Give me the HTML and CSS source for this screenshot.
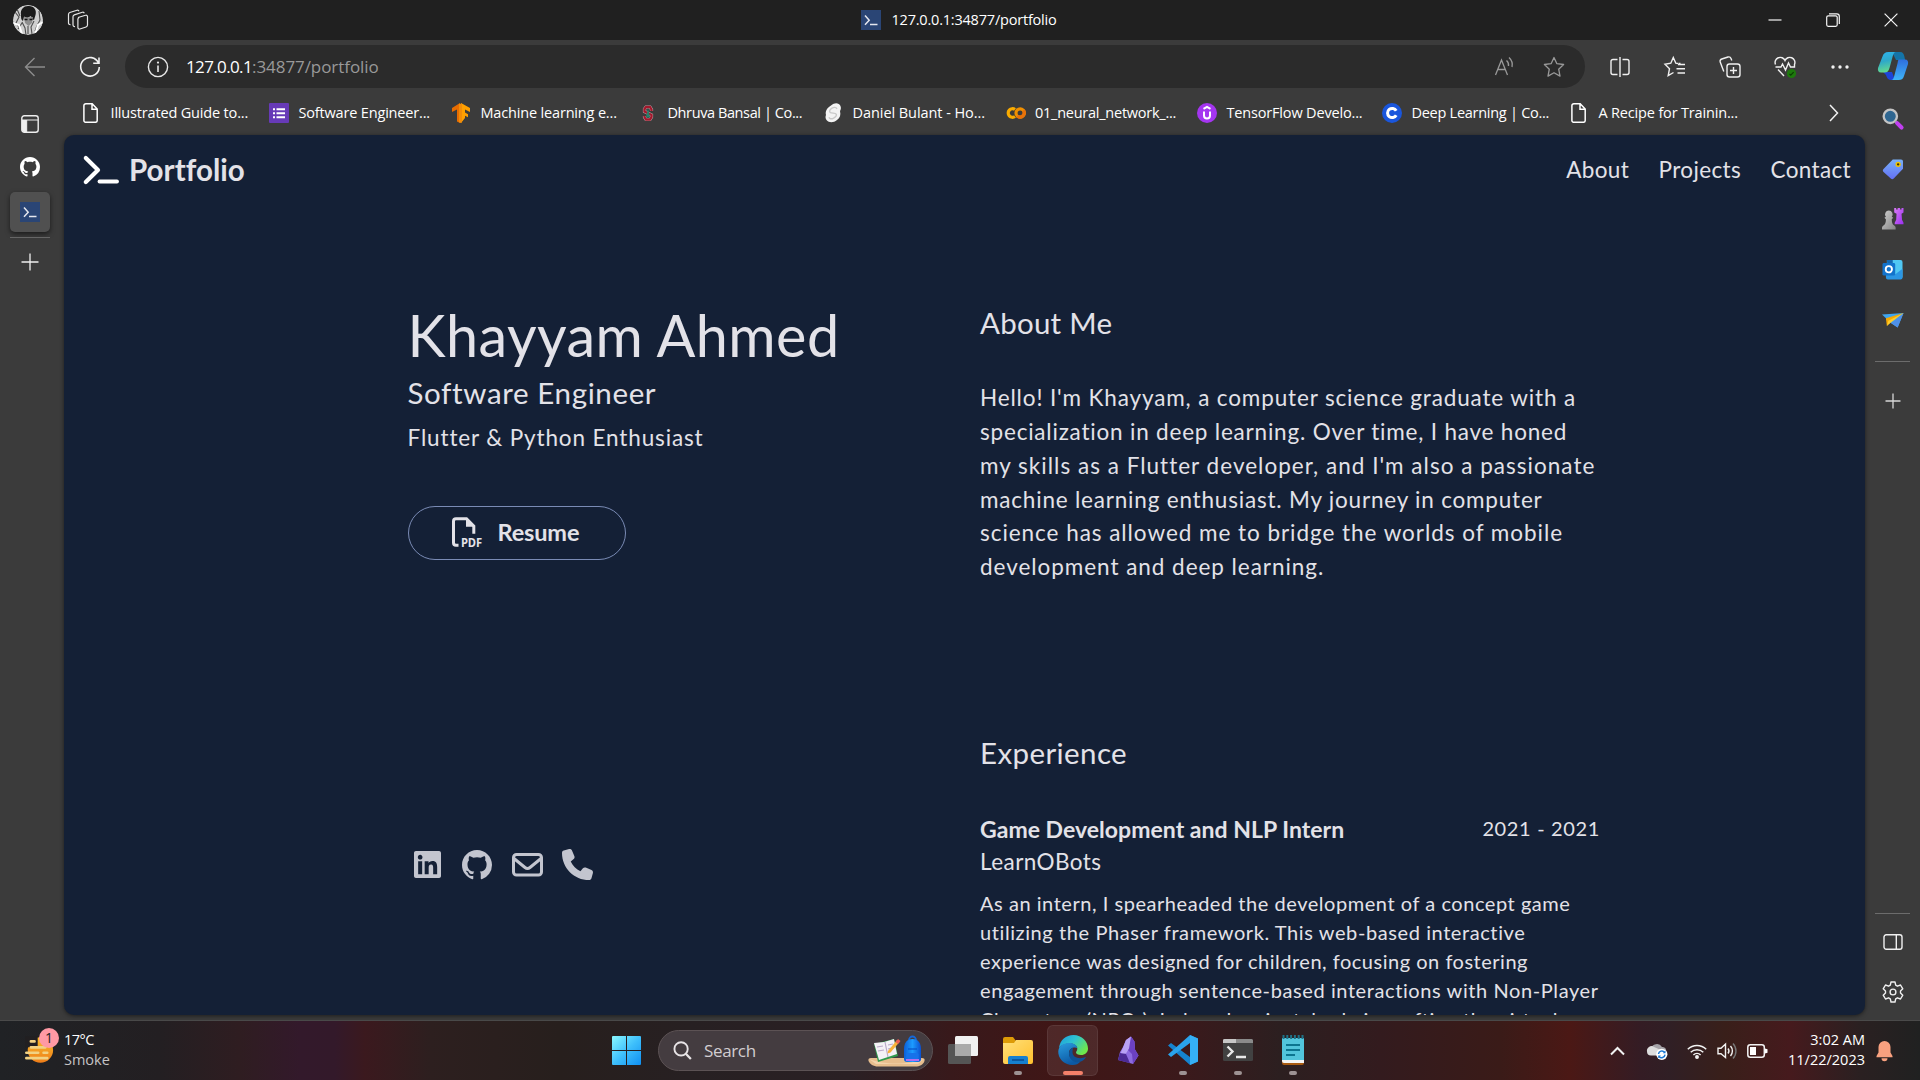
FILE: index.html
```html
<!DOCTYPE html>
<html lang="en">
<head>
<meta charset="utf-8">
<title>127.0.0.1:34877/portfolio</title>
<link rel="stylesheet" href="styles.css">
</head>
<body>
<svg width="0" height="0" class="defs">
  <defs>
    <symbol id="github" viewBox="0 0 16 16"><path d="M8 0C3.58 0 0 3.58 0 8c0 3.54 2.29 6.53 5.47 7.59.4.07.55-.17.55-.38 0-.19-.01-.82-.01-1.49-2.01.37-2.53-.49-2.69-.94-.09-.23-.48-.94-.82-1.13-.28-.15-.68-.52-.01-.53.63-.01 1.08.58 1.23.82.72 1.21 1.87.87 2.33.66.07-.52.28-.87.51-1.07-1.78-.2-3.64-.89-3.64-3.95 0-.87.31-1.59.82-2.15-.08-.2-.36-1.02.08-2.12 0 0 .67-.21 2.2.82.64-.18 1.32-.27 2-.27s1.36.09 2 .27c1.53-1.04 2.2-.82 2.2-.82.44 1.1.16 1.92.08 2.12.51.56.82 1.27.82 2.15 0 3.07-1.87 3.75-3.65 3.95.29.25.54.73.54 1.48 0 1.07-.01 1.93-.01 2.2 0 .21.15.46.55.38A8.01 8.01 0 0 0 16 8c0-4.42-3.58-8-8-8z"/></symbol>
    <symbol id="prompt" viewBox="0 0 20 20"><rect width="20" height="20" fill="#2a4575"/><path d="M4 5.500l4.200 4.700L4 14.800M9 14.600h7.500" fill="none" stroke="#e4e6ee" stroke-width="1.500"/></symbol>
    <symbol id="doc" viewBox="0 0 20 20"><path d="M4.800.8h6.400l5 5.200v11.400a1.900 1.900 0 0 1-1.900 1.900H4.800a1.900 1.900 0 0 1-1.900-1.900V2.700A1.900 1.900 0 0 1 4.800.8zM11 .9v5.300h5.200" fill="none" stroke="#fff" stroke-width="1.500"/></symbol>
    <linearGradient id="cpA" x1="0" y1="0" x2="0.2" y2="1"><stop offset="0" stop-color="#2db4f0"/><stop offset=".5" stop-color="#2fa9c9"/><stop offset="1" stop-color="#62d88f"/></linearGradient>
    <linearGradient id="cpB" x1="0" y1="0" x2="0" y2="1"><stop offset="0" stop-color="#2f6ede"/><stop offset="1" stop-color="#3fb5f8"/></linearGradient>
    <linearGradient id="violet" x1="0" y1="0" x2="1" y2="1"><stop offset="0" stop-color="#d97cf5"/><stop offset="1" stop-color="#9b2ff0"/></linearGradient>
    <linearGradient id="tagG" x1="0" y1="0" x2="0" y2="1"><stop offset="0" stop-color="#78b0f8"/><stop offset="1" stop-color="#6370f5"/></linearGradient>
    <linearGradient id="greyG" x1="0" y1="0" x2="1" y2="1"><stop offset="0" stop-color="#cfcfcf"/><stop offset="1" stop-color="#858585"/></linearGradient>
    <linearGradient id="winG" gradientUnits="userSpaceOnUse" x1="0" y1="0" x2="29" y2="29"><stop offset="0" stop-color="#8af8ff"/><stop offset=".5" stop-color="#3fc0fb"/><stop offset="1" stop-color="#0f8ff2"/></linearGradient>
    <linearGradient id="sunG" x1="0" y1="0" x2="0" y2="1"><stop offset="0" stop-color="#f8bc2c"/><stop offset="1" stop-color="#ee7d19"/></linearGradient>
    <linearGradient id="foldG" x1="0" y1="0" x2="1" y2="1"><stop offset="0" stop-color="#ffe07a"/><stop offset="1" stop-color="#ffc02e"/></linearGradient>
    <linearGradient id="edgeG" x1="0" y1="0" x2="1" y2=".6"><stop offset="0" stop-color="#1b9be0"/><stop offset=".5" stop-color="#2fc3cf"/><stop offset="1" stop-color="#6fe84c"/></linearGradient>
    <linearGradient id="edgeB" x1="0" y1="0" x2=".4" y2="1"><stop offset="0" stop-color="#2a9ddf"/><stop offset="1" stop-color="#0c59a4"/></linearGradient>
    <linearGradient id="packG" x1="0" y1="0" x2="1" y2="0"><stop offset="0" stop-color="#0c5fd8"/><stop offset=".5" stop-color="#1c9bff"/><stop offset="1" stop-color="#0b50d0"/></linearGradient>
    <clipPath id="face"><circle cx="15" cy="15" r="15"/></clipPath>
  </defs>
</svg>

<div class="desktop">
  <header class="titlebar">
    <div class="title-left">
      <svg class="avatar" viewBox="0 0 30 30"><g clip-path="url(#face)"><circle cx="15" cy="15" r="15" fill="#cfcfcf"/><path d="M8 10C7 4 11 .5 16 1c5 0 8 4 6.500 9l-1.500 5-2-1-1-3-4 2-3-1.500-1 4.500c-2-1-2-3-2-6z" fill="#1b1b1b"/><path d="M11 12l4 .5 5-.5-1 6-3.500 3-3.500-3z" fill="#8d8d8d"/><path d="M2 7l4 5-3 6 4 6M4 4l3 7M26 6l1 9-4 8M9 17l3 6 1 7M21 16l-3 6 1 7M5 24l4-6M25 19l-3 7M15 21v8" stroke="#4d4d4d" stroke-width="1.100" fill="none"/><path d="M0 18l6 2 3 9M30 17l-5 3-3 10" stroke="#fff" stroke-width="2" fill="none"/><path d="M11.500 14.500h3M16.500 14.500h3" stroke="#111" stroke-width="1.400"/></g></svg>
      <svg class="ic22" viewBox="0 0 22 22" fill="none" stroke="#e6e6e6" stroke-width="1.200"><path d="M11 8.500l7.500-2.300a1.500 1.500 0 0 1 2 1.400v8.500a2 2 0 0 1-1.400 1.900l-6.200 2a1.500 1.500 0 0 1-2-1.400V10.200a2 2 0 0 1 1.300-1.800"/><path d="M8 17.500a1.700 1.700 0 0 1-2-1.500V7.800a2 2 0 0 1 1.300-1.900l8-2.600a1.600 1.600 0 0 1 2 1"/><path d="M3.500 15.600a1.700 1.700 0 0 1-2-1.500V5.400a2 2 0 0 1 1.300-1.900L10 1.200a1.600 1.600 0 0 1 2 1"/></svg>
    </div>
    <div class="title-mid"><svg class="ic20"><use href="#prompt"/></svg><span>127.0.0.1:34877/portfolio</span></div>
    <div class="title-right">
      <svg viewBox="0 0 14 14"><path d="M.5 7h13"/></svg>
      <svg viewBox="0 0 14 14"><rect x=".7" y="2.800" width="10.500" height="10.500" rx="1.500"/><path d="M3 .8h7.800a2.500 2.500 0 0 1 2.500 2.500V11"/></svg>
      <svg viewBox="0 0 14 14"><path d="M.6.6l12.800 12.800M13.400.6L.6 13.400"/></svg>
    </div>
  </header>

  <div class="browser">
    <div class="toolbar">
      <div class="nav-buttons">
        <svg class="ic22" viewBox="0 0 22 22" fill="none" stroke="#8c8c8c" stroke-width="1.400"><path d="M21 11H2M10.500 2L1.500 11l9 9"/></svg>
        <svg class="ic22" viewBox="0 0 22 22" fill="none" stroke="#f2f2f2" stroke-width="1.600"><path d="M19.500 7A9.300 9.300 0 1 0 20.300 11M20 1.500V7.300H14.200"/></svg>
      </div>
      <div class="address">
        <svg class="ic22" viewBox="0 0 22 22"><circle cx="11" cy="11" r="9.600" fill="none" stroke="#e8e8e8" stroke-width="1.400"/><path d="M11 9.500v6.500" stroke="#e8e8e8" stroke-width="1.600"/><circle cx="11" cy="6.600" r="1.100" fill="#e8e8e8"/></svg>
        <div class="url"><span class="host">127.0.0.1</span><span class="path">:34877/portfolio</span></div>
        <svg class="ic22 read" viewBox="0 0 22 22" fill="none" stroke="#999" stroke-width="1.300"><path d="M1.500 19L7.500 4l6 15M3.800 13.500h7.500M12.500 4.500a6 6 0 0 1 2 5.500M15 1.500a10 10 0 0 1 3 9.500"/></svg>
        <svg class="ic22" viewBox="0 0 22 22" fill="none" stroke="#999" stroke-width="1.300" stroke-linejoin="round"><path d="M11 1.500l2.900 6.200 6.700.8-4.900 4.700 1.300 6.900-6-3.400-6 3.400 1.300-6.900L1.400 8.500l6.700-.8z"/></svg>
      </div>
      <div class="tools">
        <svg class="ic22" viewBox="0 0 22 22"><path d="M8.500 3.500H4a2 2 0 0 0-2 2v11a2 2 0 0 0 2 2h4.500M13.500 3.500H18a2 2 0 0 1 2 2v11a2 2 0 0 1-2 2h-4.500M11 1v20"/></svg>
        <svg class="ic22" viewBox="0 0 22 22"><path d="M14 7.500L11.800 7.200 9.300 1.500 6.800 7.200 1 8.200l4.500 4.500-1.300 7L9.500 16.500M14 8.500h7M12.500 12.700H21M13.500 17H21M14.500 7.500h2"/></svg>
        <svg class="ic22" viewBox="0 0 22 22"><rect x="8" y="8" width="13" height="13" rx="2.500"/><path d="M14.500 11v7M11 14.500h7M4.800 15.500L1.200 6a2.500 2.500 0 0 1 1.600-3L9 1a2.500 2.500 0 0 1 3 1.500l.8 2"/></svg>
        <svg class="ic22" viewBox="0 0 22 22"><path d="M1.500 8.500a5 5 0 0 1 9.500-4 5 5 0 0 1 9.500 4v2.500h-4l-2-4-3 7-3-6-1.500 3H1.500M4 13.500l6 6.500"/><circle cx="17.500" cy="17.500" r="4.600" fill="#1d7a0c" stroke="none"/><path d="M15.500 17.800l1.300 1.300 2.800-3" stroke="#0b3d04" stroke-width="1.200"/></svg>
        <svg class="ic22" viewBox="0 0 22 22"><g fill="#f2f2f2" stroke="none"><circle cx="4" cy="11" r="1.700"/><circle cx="11" cy="11" r="1.700"/><circle cx="18" cy="11" r="1.700"/></g></svg>
      </div>
    </div>

    <aside class="tabs">
      <svg class="ic18" viewBox="0 0 18 18"><rect x=".8" y=".8" width="16.400" height="16.400" rx="2.500" fill="none" stroke="#eee" stroke-width="1.400"/><path d="M1 5h16M5.700 5v12" stroke="#eee" stroke-width="1"/><path d="M1 5h4.700v12H3a2 2 0 0 1-2-2z" fill="#eee"/></svg>
      <svg class="ic20 gh" fill="#fff"><use href="#github"/></svg>
      <div class="active-tab"><svg class="ic20"><use href="#prompt"/></svg></div>
      <svg class="ic18 add" viewBox="0 0 18 18"><path d="M9 .5v17M.5 9h17" stroke="#f0f0f0" stroke-width="1.300"/></svg>
    </aside>

    <nav class="bookmarks">
      <a><svg><use href="#doc"/></svg><span>Illustrated Guide to...</span></a>
      <a><svg viewBox="0 0 20 20"><rect width="20" height="20" rx="1" fill="#673ab7"/><path d="M4 6.200h2M4 10.200h2M4 14.200h2M7.500 6.200H16M7.500 10.200H16M7.500 14.200H16" stroke="#fff" stroke-width="2"/></svg><span>Software Engineer...</span></a>
      <a><svg viewBox="0 0 20 20"><path d="M9 0v20l-3-1.500V6.500L1 9V5z" fill="#e86c00"/><path d="M10 0l9 5v4l-5-2.500v3l3 1.700v3l-3-1.500V15l-4 5z" fill="#ffa000"/><path d="M8 .8h3v18.500l-1.500.7L8 19.300z" fill="#f28c08"/></svg><span>Machine learning e...</span></a>
      <a><svg viewBox="0 0 20 20"><path d="M13.500 8V6.500L12 4H8L6.500 6v2.500l7 3.500v2L12 16.500H8L6.500 14v-1" fill="none" stroke="#b9b9b9" stroke-width="3.200"/><path d="M13.500 8V6.500L12 4H8L6.500 6v2.500l7 3.500v2L12 16.500H8L6.500 14v-1" fill="none" stroke="#a3182c" stroke-width="2.400"/><path d="M10 5l2 9.500H8z" fill="#26806b"/></svg><span>Dhruva Bansal | Co...</span></a>
      <a><svg viewBox="0 0 20 20"><path d="M8 2.500C12-.8 16 0 17.500 3c1 2.500 0 4-.5 5 1 4 0 7-3 9-3.500 3-8 3-10.500 0-1.500-2-1-4-.5-5C2 8 4 5 8 2.500z" fill="#f3f3f3"/><path d="M14 6c-1-2-3-2-5-.8S5.500 8.500 7.500 9.700c2 .8 5 0 5.800 1.600.7 2-1 3-3 4s-3.800.5-4.300-1" fill="none" stroke="#c9c9c9" stroke-width="1.400"/></svg><span>Daniel Bulant - Ho...</span></a>
      <a><svg viewBox="0 0 20 20" fill="none" stroke-width="3.200"><path d="M9 6.500a4.300 4.300 0 1 0 0 7" stroke="#f9ab00"/><circle cx="14.200" cy="10" r="4.200" stroke="#f09000"/><path d="M17.300 7.200a4.200 4.200 0 0 1-6 5.800" stroke="#e8710a"/></svg><span>01_neural_network_...</span></a>
      <a><svg viewBox="0 0 20 20" fill="none" stroke="#fff" stroke-width="2"><circle cx="10" cy="10" r="10" fill="#a435f0" stroke="none"/><path d="M6.500 5.800L10 3.900l3.500 1.900M7 8.500v4a3 3 0 0 0 6 0v-4"/></svg><span>TensorFlow Develo...</span></a>
      <a><svg viewBox="0 0 20 20"><circle cx="10" cy="10" r="10" fill="#1a56dc"/><path d="M14.200 7.800a4.600 4.600 0 1 0 0 4.400" fill="none" stroke="#fff" stroke-width="3"/></svg><span>Deep Learning | Co...</span></a>
      <a><svg><use href="#doc"/></svg><span>A Recipe for Trainin...</span></a>
      <svg class="more" viewBox="0 0 20 20"><path d="M6 2l7.500 8L6 18" fill="none" stroke="#f2f2f2" stroke-width="1.500"/></svg>
    </nav>

    <main class="page">
      <header class="site-head">
        <svg class="logo" viewBox="0 0 35 28" fill="none" stroke="#fff"><path d="M1.800 2L14 14 1.800 26" stroke-width="4.200" stroke-linecap="round" stroke-linejoin="round"/><path d="M15.500 25.500h17.500" stroke-width="3.800" stroke-linecap="round"/></svg>
        <span class="brand">Portfolio</span>
        <nav class="links"><a>About</a><a>Projects</a><a>Contact</a></nav>
      </header>
      <div class="columns">
        <section class="intro">
          <h1>Khayyam Ahmed</h1>
          <h2>Software Engineer</h2>
          <p>Flutter &amp; Python Enthusiast</p>
          <a class="resume">
            <svg viewBox="0 0 30 30"><path d="M6.500 28.200H4A2.500 2.500 0 0 1 1.500 25.700V4.200A2.500 2.500 0 0 1 4 1.700H14.500L21.800 9v7.800" fill="none" stroke="#e3e2e8" stroke-width="3"/><path d="M14 1l8.500 8.800H14z" fill="#e3e2e8"/><text x="9" y="30" textLength="21" lengthAdjust="spacingAndGlyphs">PDF</text></svg>
            <span>Resume</span>
          </a>
          <div class="social">
            <svg class="in" viewBox="0 32 448 448"><path d="M416 32H31.900C14.300 32 0 46.500 0 64.300v383.400C0 465.500 14.300 480 31.900 480H416c17.600 0 32-14.500 32-32.300V64.300c0-17.800-14.400-32.300-32-32.300zM135.400 416H69V202.200h66.500V416zm-33.200-243c-21.300 0-38.500-17.300-38.500-38.500S80.900 96 102.200 96c21.200 0 38.500 17.300 38.500 38.500 0 21.300-17.200 38.500-38.500 38.500zm282.100 243h-66.400V312c0-24.800-.5-56.700-34.500-56.700-34.600 0-39.900 27-39.900 54.900V416h-66.400V202.200h63.700v29.200h.9c8.900-16.800 30.600-34.500 62.900-34.500 67.200 0 79.700 44.300 79.700 101.900V416z"/></svg>
            <svg class="git"><use href="#github"/></svg>
            <svg class="mail" viewBox="0 0 31 24"><rect x="1.500" y="1.500" width="28" height="20.500" rx="3" fill="none" stroke="#c3c5cf" stroke-width="3"/><path d="M2 5.500l11 9a4 4 0 0 0 5 0l11-9" fill="none" stroke="#c3c5cf" stroke-width="3"/></svg>
            <svg class="phone" viewBox="0 0 512 512"><path d="M164.900 24.600c-7.700-18.600-28-28.500-47.400-23.200l-88 24C12.100 30.200 0 46 0 64C0 311.400 200.600 512 448 512c18 0 33.800-12.100 38.600-29.500l24-88c5.300-19.400-4.600-39.700-23.200-47.400l-96-40c-16.300-6.800-35.200-2.100-46.300 11.600L304.700 368C234.300 334.700 177.300 277.700 144 207.300L193.300 167c13.700-11.200 18.400-30 11.600-46.300l-40-96z"/></svg>
          </div>
        </section>
        <section class="details">
          <h2 class="about-title">About Me</h2>
          <p class="about"><span>Hello! I'm Khayyam, a computer science graduate with a</span> <span>specialization in deep learning. Over time, I have honed</span> <span>my skills as a Flutter developer, and I'm also a passionate</span> <span>machine learning enthusiast. My journey in computer</span> <span>science has allowed me to bridge the worlds of mobile</span> <span>development and deep learning.</span></p>
          <h2 class="exp-title">Experience</h2>
          <div class="job-head"><h3>Game Development and NLP Intern</h3><time>2021 - 2021</time></div>
          <div class="company">LearnOBots</div>
          <p class="job"><span>As an intern, I spearheaded the development of a concept game</span> <span>utilizing the Phaser framework. This web-based interactive</span> <span>experience was designed for children, focusing on fostering</span> <span>engagement through sentence-based interactions with Non-Player</span> <span>Characters (NPCs). I played a pivotal role in crafting the virtual</span></p>
        </section>
      </div>
    </main>

    <aside class="sidebar">
      <svg class="copilot" viewBox="0 0 30 28"><path d="M14 0h8c3 0 4 2 4.500 5l.6 3H18z" fill="#1474a8"/><path d="M5 20h9l3 8h-3c-4 0-5-2-6-5z" fill="#1d45d8"/><path d="M10.500 0H18c-2 0-2.700 2-3.500 5l-3 11c-1 3-2 4.500-5 4.500H3c-2.500 0-3.500-2-3-4.500L4.500 4.500C5.500 1.500 7 0 10.500 0z" fill="url(#cpA)"/><path d="M21 7.500h6c2.500 0 3.500 2 3 4.500L26 24c-1 3-2.500 4-5.500 4H13c2 0 2.800-2 3.500-5l3-11.500c.7-3 .5-4 1.500-4z" fill="url(#cpB)"/></svg>
      <svg class="app a1" viewBox="0 0 22 22"><circle cx="8.500" cy="8.500" r="6.800" fill="#2f6690" stroke="#c4c4c4" stroke-width="2.400"/><path d="M13.500 13.500l2 2" stroke="#aaa" stroke-width="2.500"/><path d="M15.500 15.500l4.500 4.500" stroke="#c13ff0" stroke-width="4.200" stroke-linecap="round"/></svg>
      <svg class="app" viewBox="0 0 22 22"><path d="M11 1.500h8.500a2 2 0 0 1 2 2V11L12 21a2 2 0 0 1-3 0L1.300 14a2 2 0 0 1 0-2.500z" fill="url(#tagG)"/><circle cx="16.500" cy="6.500" r="2" fill="#403300" stroke="#f0c400" stroke-width="1.500"/></svg>
      <svg class="app" viewBox="0 0 22 22"><path d="M12.500 0h2v1.500h1.500V0h2.500v1.500H20V0h2v4.500l-2 1.500.5 6 1.500 3v1.500h-9V15l1.500-3 .4-6-2.400-1.500z" fill="url(#violet)"/><path d="M7 2.500a4 4 0 0 1 3 6.500l1.500 1-1.500 1.500c0 3 .5 5 2.500 6.500 1.500 1 1.500 2 1.500 4H0c0-2 0-3 1.500-4C3.500 16.500 4 14.500 4 11.500L2.500 10 4 9a4 4 0 0 1 3-6.500z" fill="url(#greyG)"/></svg>
      <svg class="app" viewBox="0 0 22 22"><path d="M5 1h14a2 2 0 0 1 2 2v16H5z" fill="#50c8f4"/><path d="M6 11h7v-6h-2V1H5z" fill="#1468b0"/><path d="M4 10l9 6 8-6v9a2 2 0 0 1-2 2H6a2 2 0 0 1-2-2z" fill="#2b96e4"/><rect x=".5" y="4" width="13" height="13" rx="1.500" fill="#1273cc"/><circle cx="7" cy="10.500" r="3.200" fill="none" stroke="#fff" stroke-width="1.900"/></svg>
      <svg class="app" viewBox="0 0 22 22"><path d="M0 5.500L22 4l-6 15-6.500-4.500z" fill="#3fa5ee"/><path d="M22 4L9.500 14.500 16 19z" fill="#4f90e8"/><path d="M22 4L4 9.500l1 8 3-5z" fill="#f6a800"/><path d="M5 17.500l4.500-4L22 4 6.500 12z" fill="#ffcd2c"/></svg>
      <hr>
      <svg class="ic18 plus" viewBox="0 0 18 18"><path d="M9 1.500v15M1.500 9h15" stroke="#d8d8d8" stroke-width="1.300"/></svg>
      <div class="grow"></div>
      <hr>
      <svg class="panel" viewBox="0 0 20 16" fill="none" stroke="#f0f0f0" stroke-width="1.400"><rect x="1" y=".8" width="18" height="14.400" rx="2.200"/><path d="M13.300 1v14"/></svg>
      <svg class="ic22 gear" viewBox="0 0 22 22" fill="none" stroke="#f0f0f0" stroke-width="1.400" stroke-linejoin="round"><path d="M9 1h4l.7 3.200 1.700 1L18.500 4l2.300 3.800-2.300 2.200v2l2.300 2.200-2.300 3.800-3.100-1.200-1.700 1L13 21H9l-.7-3.200-1.700-1L3.500 18l-2.300-3.800L3.500 12v-2L1.200 7.800 3.500 4l3.100 1.200 1.700-1z"/><circle cx="11" cy="11" r="2.900"/></svg>
    </aside>
  </div>

  <footer class="taskbar">
    <div class="weather">
      <div class="wx">
        <svg viewBox="0 0 32 38"><circle cx="17" cy="24" r="14" fill="url(#sunG)"/><path d="M0 9h14v12H0z" fill="#211f21"/><path d="M6.500 14.500h4M6.500 21h16M1.500 27h13M20.500 27h4M1.500 33h23" stroke="#f1d283" stroke-width="3" stroke-linecap="round"/></svg>
        <b>1</b>
      </div>
      <div class="wt"><span class="temp">17°C</span><span class="cond">Smoke</span></div>
    </div>
    <div class="dock">
      <svg class="start" viewBox="0 0 29 29" fill="url(#winG)"><path d="M0 1a1 1 0 0 1 1-1h13v14H0zM15 0h13a1 1 0 0 1 1 1v13H15zM0 15h14v14H1a1 1 0 0 1-1-1zM15 15h14v13a1 1 0 0 1-1 1H15z"/></svg>
      <div class="search">
        <svg class="mag" viewBox="0 0 20 20" fill="none" stroke="#e8e4e6"><circle cx="8.500" cy="8.300" r="7" stroke-width="2"/><path d="M13.500 13.500l5.300 5.500" stroke-width="2.400"/></svg>
        <span>Search</span>
        <svg class="bag" viewBox="0 0 57 32"><path d="M3 23h51c2 0 3 1 2.500 3-1.500 4-5 5.500-9 5.500H10C5 31.500 2 29 .5 26 0 24 1 23 3 23z" fill="#e6bd8d"/><path d="M1 24c15 6 40 6 55 0l-6 5H8z" fill="#f2d3ab"/><path d="M6 9l20-5 4 17-20 6z" fill="#2f9a4c"/><path d="M6 8l10-1 10-3 3 15-9 3-9 3z" fill="#f4f1f6"/><path d="M17 7l3 15M9 12l6-1M10 16l6-1M20 10l5-1M20 14l6-1.500" stroke="#b9a8c9" stroke-width="1.200"/><path d="M20 16L29 5l2.500 2-9 10.500-3 1z" fill="#f7b23b"/><path d="M27.500 7L30 4l2.500 2L30 9z" fill="#ee5e53"/><path d="M41 5a3.500 3.500 0 0 1 7 0" fill="none" stroke="#1568d8" stroke-width="1.800"/><path d="M36 14c0-6 3-10 8.500-10S53 8 53 14v10a3 3 0 0 1-3 3H39a3 3 0 0 1-3-3z" fill="url(#packG)"/><path d="M40 14h9" stroke="#0a52c8" stroke-width="1.200"/><rect x="38.500" y="18" width="12" height="6" rx="1.500" fill="#1672ea"/><path d="M38 25h13" stroke="#b16df0" stroke-width="2"/></svg>
      </div>
      <div class="slot"><svg viewBox="0 0 30 30"><rect x="7" y="1" width="23" height="20" rx="1.500" fill="#f1f1f1"/><rect x="0" y="9" width="23" height="20" rx="1.500" fill="#555"/><path d="M7 9h16v12H7z" fill="#aaa"/></svg></div>
      <div class="slot"><svg viewBox="0 0 30 30"><path d="M0 4a2 2 0 0 1 2-2h8l3 4h15v6H0z" fill="#dd9b07"/><path d="M0 8h11l2-3h15a2 2 0 0 1 2 2v20a2 2 0 0 1-2 2H2a2 2 0 0 1-2-2z" fill="url(#foldG)"/><path d="M5 29v-6a2 2 0 0 1 2-2h16a2 2 0 0 1 2 2v6z" fill="#1680d0"/><path d="M9 25h12" stroke="#0a4f93" stroke-width="1.600"/></svg><i></i></div>
      <div class="slot on"><svg viewBox="0 0 30 30"><path d="M1 13C2 5 8 0 15.500 0 24 0 30 6.500 30 13.500c0 4-3 6.500-7 6.500-3 0-5-1-5-2.500 0-1 1.300-1.500 1.300-4 0-3-3.500-5-7.300-5C7 8.500 3 10 1 13z" fill="url(#edgeG)"/><path d="M.3 16C1 10 6 8 11.500 8c4.500 0 7.500 2.500 7.800 5-2-1-8-1-8.300 5-.2 6 6 9.500 11.500 8.500-2 2.500-4.500 3.500-8 3.500C6 30-.3 23 .3 16z" fill="url(#edgeB)"/><path d="M15 12.500c-2 1-4 3-4 6C11 25 17 29 23 26.500c2-1 4-2.500 5-4.500-6 2.500-13.500 1-13.500-5 0-2 .5-3.500.5-4.500z" fill="#0e5296"/></svg><i></i></div>
      <div class="slot"><svg viewBox="0 0 30 30"><path d="M13 5l5-3.500 3.500 5 .5 8 3.500 6L20 29l-7-2-8-2 2-8 3-5z" fill="#8d6be0"/><path d="M18 1.500l3.500 5 .5 8 3.500 6L20 29l-1-10-6-6z" fill="#6b41c2"/><path d="M13 5l5-3.500-2 12-3 5-6 1 3-7z" fill="#b9a2f5"/><path d="M7 18l6 1 4 9.300L5 25z" fill="#4c2b96"/></svg></div>
      <div class="slot"><svg viewBox="0 0 30 30"><path d="M22 0l8 3.500v23L22 30 0 10.500 3 8l19 14z" fill="#1583cf"/><path d="M22 8L3 22l-3-2.500L22 0z" fill="#2aa3ec"/><path d="M22 0l8 3.500v23L22 30z" fill="#35b0f5"/></svg><i></i></div>
      <div class="slot"><svg viewBox="0 0 30 30"><rect y="4" width="30" height="22" rx="1.500" fill="#414141"/><path d="M0 8V5.500A1.500 1.500 0 0 1 1.500 4h27A1.500 1.500 0 0 1 30 5.500V8z" fill="#8a8a8a"/><path d="M0 8V5.500A1.500 1.500 0 0 1 1.500 4H13v4z" fill="#c6c6c6"/><path d="M4.500 11.500l5 5-5 5M13 22h10" fill="none" stroke="#e8e8e8" stroke-width="2.400"/></svg><i></i></div>
      <div class="slot"><svg viewBox="0 0 30 30"><path d="M4 26h22v2a2 2 0 0 1-2 2H6a2 2 0 0 1-2-2z" fill="#a85a10"/><path d="M4 3h22v25H6a2 2 0 0 1-2-2z" fill="#f4f4f4"/><path d="M4 3h22v22H4z" fill="#52c5dc"/><path d="M5.500 0v4M9.300 0v4M13.100 0v4M16.900 0v4M20.700 0v4M24.500 0v4" stroke="#1f7287" stroke-width="2"/><path d="M8 10h14M8 15h14M8 20h9" stroke="#0c7590" stroke-width="2"/></svg><i></i></div>
    </div>
    <div class="tray">
      <svg class="chev" viewBox="0 0 15 10"><path d="M1 8.500L7.500 2 14 8.500" fill="none" stroke="#f2f2f2" stroke-width="2"/></svg>
      <svg class="cloud" viewBox="0 0 21 18"><path d="M4 7a6 6 0 0 1 11-2c3 0 5 2 4 6l-8 2z" fill="#a5a3a8"/><path d="M0 9.500A4.500 4.500 0 0 1 7 5l7 3-2 5.500H4A4 4 0 0 1 0 9.500z" fill="#ddd"/><circle cx="14.800" cy="12.300" r="5.600" fill="#fff"/><path d="M11.500 12a3.400 3.400 0 0 1 6-1.800M18 12.600a3.400 3.400 0 0 1-6 1.800" fill="none" stroke="#1676d2" stroke-width="1.500"/><path d="M18.500 8.500V11.200H15.800zM11.200 16.200v-2.700h2.700z" fill="#1676d2"/></svg>
      <svg class="wifi" viewBox="0 0 20 16" fill="none" stroke="#f2f2f2" stroke-width="1.500"><path d="M.8 6.200a13 13 0 0 1 18.400 0M3.700 9.200a9 9 0 0 1 12.600 0M6.400 12a5.200 5.200 0 0 1 7.200 0"/><circle cx="10" cy="14" r="1.200" fill="#f2f2f2"/></svg>
      <svg class="vol" viewBox="0 0 20 18" fill="none" stroke="#f2f2f2" stroke-width="1.400"><path d="M1 6.200h3L8.500 2v13.500L4 11.800H1zM11 6.500a4 4 0 0 1 0 5M13.500 4a7.500 7.500 0 0 1 0 10"/><path d="M16 1.500a11 11 0 0 1 0 15" stroke="#777"/></svg>
      <svg class="bat" viewBox="0 0 21 14"><rect x=".8" y=".8" width="16.500" height="12.400" rx="2.500" fill="none" stroke="#f2f2f2" stroke-width="1.500"/><path d="M3 3h6v8H3z" fill="#fff"/><path d="M18 4.500l2.500.8v3.400L18 9.500z" fill="#fff"/></svg>
      <div class="clock"><span>3:02 AM</span><span>11/22/2023</span></div>
      <svg class="bell" viewBox="0 0 17 20"><path d="M8.500 0a6 6 0 0 1 6 6v5.500l2 3.500v1.200H.5V15l2-3.500V6a6 6 0 0 1 6-6zM5.500 17.200h6a3 3 0 0 1-6 0z" fill="#f9a17f"/></svg>
    </div>
  </footer>
</div>
</body>
</html>
```
FILE: styles.css
```css
* { box-sizing: border-box; margin: 0; padding: 0; }
body { width: 1920px; height: 1080px; overflow: hidden; background: #3b3b3b; color: #fff; font: 14.5px/20px "Open Sans", "Noto Sans", sans-serif; }
svg { display: block; flex: none; overflow: visible; }
.defs { position: absolute; }
h1, h2, h3 { font-weight: 400; }
.desktop { display: flex; flex-direction: column; height: 1080px; }
.ic18 { width: 18px; height: 18px; }
.ic20 { width: 20px; height: 20px; }
.ic22 { width: 22px; height: 22px; }

/* window title bar */
.titlebar { display: grid; grid-template-columns: 1fr auto 1fr; align-items: center; height: 40px; background: #202020; }
.title-left { display: flex; align-items: center; gap: 24px; padding-left: 13px; }
.avatar { width: 30px; height: 30px; }
.title-mid { display: flex; align-items: center; gap: 10px; letter-spacing: -.2px; transform: translateX(-1px); }
.title-right { display: flex; justify-content: flex-end; gap: 44px; padding-right: 22px; }
.title-right svg { width: 14px; height: 14px; fill: none; stroke: #f5f5f5; stroke-width: 1.200; }

/* browser frame */
.browser { display: grid; grid-template: 52px 43px 880px 6px / 64px 1801px 55px; height: 981px; border-bottom: 1px solid #4a4a4a; }
.toolbar { grid-column: 1 / 3; display: flex; align-items: center; padding: 1px 0 0 24px; }
.nav-buttons { display: flex; gap: 33px; width: 101px; }
.address { display: flex; align-items: center; width: 1460px; height: 43px; border-radius: 22px; background: #2b2b2b; padding: 0 20px 0 22px; gap: 27px; }
.url { flex: 1; font-size: 17px; line-height: 24px; margin-left: -10px; }
.host { letter-spacing: -.63px; }
.path { color: #999; letter-spacing: -.07px; }
.tools { display: flex; gap: 33.200px; padding-left: 23.500px; }
.tools svg { fill: none; stroke: #f0f0f0; stroke-width: 1.400; }

.tabs { grid-row: 2 / 5; display: flex; flex-direction: column; align-items: center; width: 60px; padding-top: 23px; }
.gh { margin-top: 24px; }
.active-tab { display: grid; place-items: center; width: 40px; height: 40px; margin-top: 15px; border-radius: 5px; background: #505050; box-shadow: 0 2px 5px rgba(0,0,0,.55); }
.add { margin-top: 5px; border-top: 1px solid #666; border-width: 1px 0 0; width: 40px; height: 50px; padding: 15px 11px 16px; }

.bookmarks { display: grid; grid-template-columns: 188px 182px 187px 185px 182.500px 191.500px 185px 187px 190px 1fr; padding-left: 17px; align-items: center; height: 42px; }
.bookmarks a { display: flex; align-items: center; gap: 9.500px; white-space: nowrap; letter-spacing: -.17px; }
.bookmarks svg { width: 20px; height: 20px; }
.bookmarks a:nth-child(4) { letter-spacing: -.4px; }
.bookmarks a:nth-child(5) { letter-spacing: -.06px; }
.bookmarks a:nth-child(6) { letter-spacing: -.25px; }
.bookmarks a:nth-child(8) { letter-spacing: -.27px; }
.bookmarks .more { justify-self: end; margin-right: 21px; }

/* portfolio page */
.page { grid-column: 2; grid-row: 3; overflow: hidden; border-radius: 10px; background: #142036; color: #e3e2e8; font-family: Lato, "Open Sans", sans-serif; font-size: 22.500px; box-shadow: 0 1px 4px rgba(0,0,0,.5); }
.site-head { display: flex; align-items: center; height: 68px; padding: 1px 14px 0 20px; }
.logo { width: 35px; height: 28px; }
.brand { font-size: 29.500px; font-weight: 700; letter-spacing: .05px; margin-left: 10px; line-height: 34px; }
.links { display: flex; gap: 29.500px; margin-left: auto; line-height: 34px; letter-spacing: .35px; }
.columns { display: flex; padding-top: 100px; }
.intro { width: 572.500px; margin-left: 343.500px; }
h1 { font-size: 57.500px; line-height: 64px; letter-spacing: .45px; margin-bottom: 7px; font-weight: 400; }
h2 { font-size: 29.500px; line-height: 38px; letter-spacing: .25px; }
.intro h2 { letter-spacing: .63px; margin-bottom: 10.500px; }
.intro p { line-height: 30px; letter-spacing: .860px; }
.resume { display: flex; align-items: center; width: 218.500px; height: 53.500px; margin-top: 53.500px; padding: 0 0 2px 43px; gap: 16px; border: 1.500px solid #7a8bb5; border-radius: 27px; font-size: 23.500px; font-weight: 700; letter-spacing: -.15px; line-height: 30px; }
.resume svg { width: 30px; height: 30px; }
.resume text { font: 700 13px "Open Sans", sans-serif; fill: #e3e2e8; }
.social { display: flex; align-items: center; gap: 20px; height: 32px; margin: 289px 0 0 6.500px; }
.social svg { fill: #c3c5cf; }
.in { width: 27px; height: 27px; }
.git { width: 30px; height: 30px; margin-left: 1px; }
.mail { width: 31px; height: 24px; }
.phone { width: 31px; height: 31px; margin-left: -1px; }
.details { width: 620px; padding-top: 1px; }
.about { margin-top: 39px; line-height: 33.850px; }
.about span, .job span { display: block; white-space: nowrap; }
.about span:nth-child(1) { letter-spacing: .860px; }
.about span:nth-child(2) { letter-spacing: .798px; }
.about span:nth-child(3) { letter-spacing: 1.020px; }
.about span:nth-child(4) { letter-spacing: .800px; }
.about span:nth-child(5), .about span:nth-child(6) { letter-spacing: .955px; }
.exp-title { margin-top: 150px; letter-spacing: .40px; }
.job-head { display: flex; align-items: center; justify-content: space-between; margin-top: 39px; height: 34px; }
h3 { font-size: 23px; font-weight: 700; letter-spacing: .03px; line-height: 34px; padding-top: 1px; }
time { font-size: 20px; letter-spacing: .65px; }
.company { line-height: 34px; letter-spacing: .45px; }
.job { margin-top: 9.500px; font-size: 20px; line-height: 29px; letter-spacing: .54px; }
.job span:nth-child(2) { letter-spacing: .590px; }
.job span:nth-child(3) { letter-spacing: .513px; }
.job span:nth-child(4) { letter-spacing: .595px; }

/* right-hand app strip */
.sidebar { grid-column: 3; grid-row: 1 / 5; display: flex; flex-direction: column; align-items: center; padding: 12px 0 18px 0; }
.copilot { width: 30px; height: 28px; }
.app { width: 21.500px; height: 21.500px; margin-top: 28.700px; }
.a1 { margin-top: 28px; }
.sidebar hr { width: 35px; border: 0; border-top: 1px solid #6c6c6c; margin-top: 30.500px; }
.plus { margin-top: 30px; }
.grow { flex: 1; }
.panel { width: 20px; height: 16px; margin-top: 20px; }
.gear { margin-top: 31px; }

/* taskbar */
.taskbar { display: flex; position: relative; height: 59px; background: linear-gradient(90deg, #202225 0, #231f22 160px, #2f1d21 240px, #33192b 300px, #33192a 335px, #3b191e 365px, #2d1f1f 430px, #271f1d 560px, #272022 690px, #2a2024 850px, #38191b 950px, #401616 1060px, #3b191b 1180px, #2c1f20 1280px, #331b1e 1380px, #3a1b18 1500px, #4b1815 1570px, #341c24 1640px, #301f25 1670px, #391f1a 1725px, #461a1d 1790px, #2a2021 1860px, #202121 1920px); }
.weather { display: flex; width: 612px; padding: 7px 0 0 25px; }
.wx { position: relative; width: 39px; }
.wx svg { width: 29px; height: 35px; }
.wx b { position: absolute; left: 14px; top: 0; width: 20px; height: 20px; border-radius: 50%; background: #ff99a4; color: #222; font-weight: 400; text-align: center; font-size: 14px; }
.wt { display: flex; flex-direction: column; padding-top: 2px; }
.temp { letter-spacing: -.5px; }
.cond { color: #c5c3c4; }
.dock { display: flex; align-items: center; }
.start { width: 29px; height: 29px; }
.search { display: flex; align-items: center; width: 275px; height: 41px; margin-left: 17px; padding: 0 7px 0 14px; border: 1px solid #5c5254; border-radius: 21px; background: #443c40; font-size: 17px; letter-spacing: -.35px; color: #d2cdd0; }
.mag { width: 19px; height: 19px; margin-right: 12px; }
.bag { width: 57px; height: 32px; margin-left: auto; }
.slot { position: relative; display: grid; place-items: center; width: 51px; height: 51px; margin: 0 2px; border-radius: 6px; }
.dock .slot:nth-child(3) { margin-left: 4px; }
.slot svg { width: 30px; height: 30px; margin-top: -1px; }
.slot i { position: absolute; left: 21.500px; bottom: 1px; width: 8px; height: 4px; border-radius: 2px; background: #9d9293; }
.on { background: rgba(255,255,255,.08); box-shadow: inset 0 0 0 1px rgba(255,255,255,.07); }
.on i { left: 15.500px; width: 20px; background: #f4806a; }
.tray { display: flex; align-items: center; margin-left: auto; padding-right: 27px; }
.chev { width: 15px; height: 10px; }
.cloud { width: 21px; height: 18px; margin-left: 22px; }
.wifi { width: 20px; height: 16px; margin-left: 19px; }
.vol { width: 20px; height: 18px; margin-left: 10px; }
.bat { width: 21px; height: 14px; margin-left: 10px; }
.clock { display: flex; flex-direction: column; align-items: flex-end; width: 97px; padding-bottom: 1px; }
.bell { width: 17px; height: 20px; margin-left: 11px; }
```
